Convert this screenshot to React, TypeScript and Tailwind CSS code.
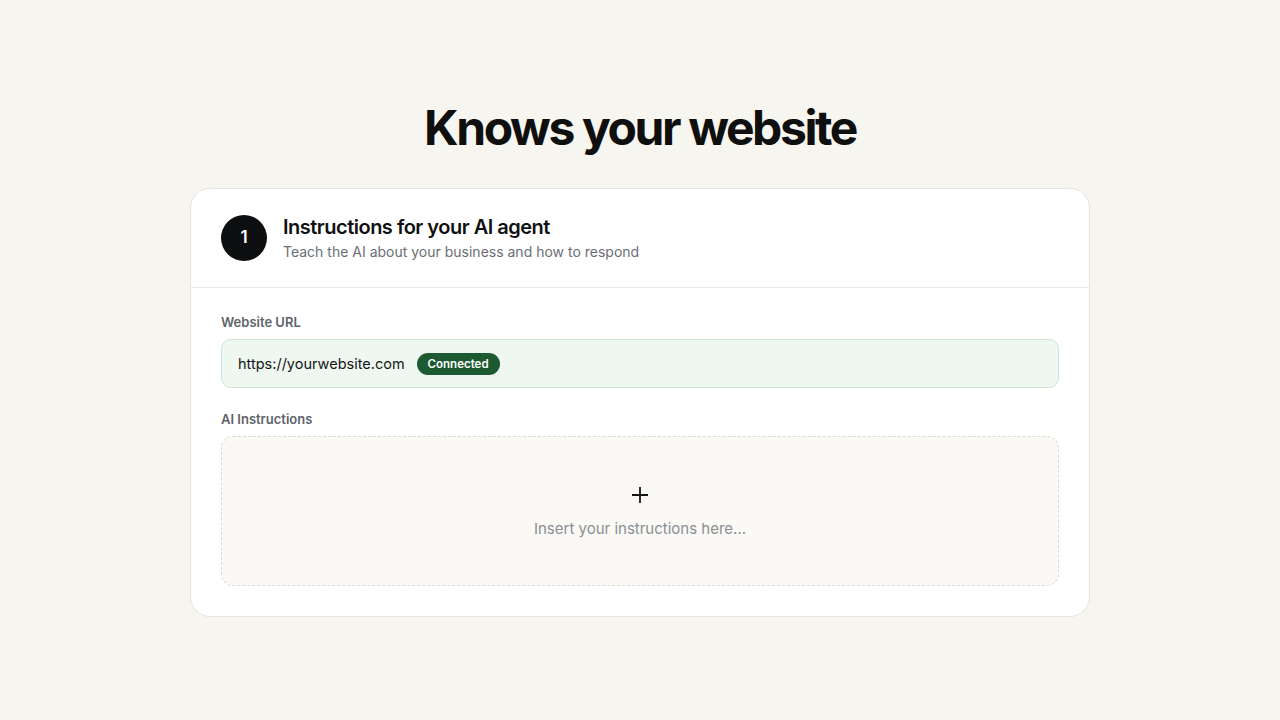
import React from "react";

export default function App() {
  return (
    <div className="min-h-screen w-full bg-[#f7f5ef] flex flex-col items-center" style={{ fontFamily: "Inter, 'Noto Sans', sans-serif" }}>
      <h1 className="mt-[104px] text-[48px] leading-[48px] font-bold tracking-[-0.05em] text-[#0f0f0f]">Knows your website</h1>
      <div className="mt-[36px] w-[900px] bg-white rounded-[20px] border border-[#e7e4dd]">
        <div className="flex items-center gap-4 px-[30px] pt-[25px] pb-[25px] border-b border-[#ebe9e4]">
          <div className="w-[46px] h-[46px] rounded-full bg-[#0e0f10] text-white flex items-center justify-center text-[17px] font-semibold">1</div>
          <div className="flex flex-col">
            <div className="text-[20px] leading-[26px] font-semibold tracking-[-0.025em] text-[#111]">Instructions for your AI agent</div>
            <div className="text-[14px] leading-[20px] text-[#6b6e74] mt-[2px]">Teach the AI about your business and how to respond</div>
          </div>
        </div>
        <div className="px-[30px] pt-[26px] pb-[30px]">
          <div className="text-[13px] leading-[16px] font-semibold text-[#5f636a]">Website URL</div>
          <div className="mt-[9px] h-[49px] rounded-[10px] bg-[#eef7f0] border border-[#cde2d4] flex items-center px-4 gap-3">
            <span className="text-[14.5px] text-[#151515]">https://yourwebsite.com</span>
            <span className="h-[22px] px-[11px] rounded-full bg-[#1d5a31] text-white text-[11.5px] leading-[23px] font-semibold">Connected</span>
          </div>
          <div className="mt-[23px] text-[13px] leading-[16px] font-semibold text-[#5f636a]">AI Instructions</div>
          <div className="mt-[9px] h-[150px] pt-[5px] rounded-[12px] bg-[#faf9f6] border border-dashed border-[#dcdcd2] flex flex-col items-center justify-center">
            <svg width="20" height="20" viewBox="0 0 20 20" className="mt-[-3px]">
              <path d="M10 2 V18 M2 10 H18" stroke="#141414" strokeWidth="1.8" />
            </svg>
            <div className="mt-[14px] text-[15px] leading-[20px] text-[#8b8e93]">Insert your instructions here...</div>
          </div>
        </div>
      </div>
    </div>
  );
}
